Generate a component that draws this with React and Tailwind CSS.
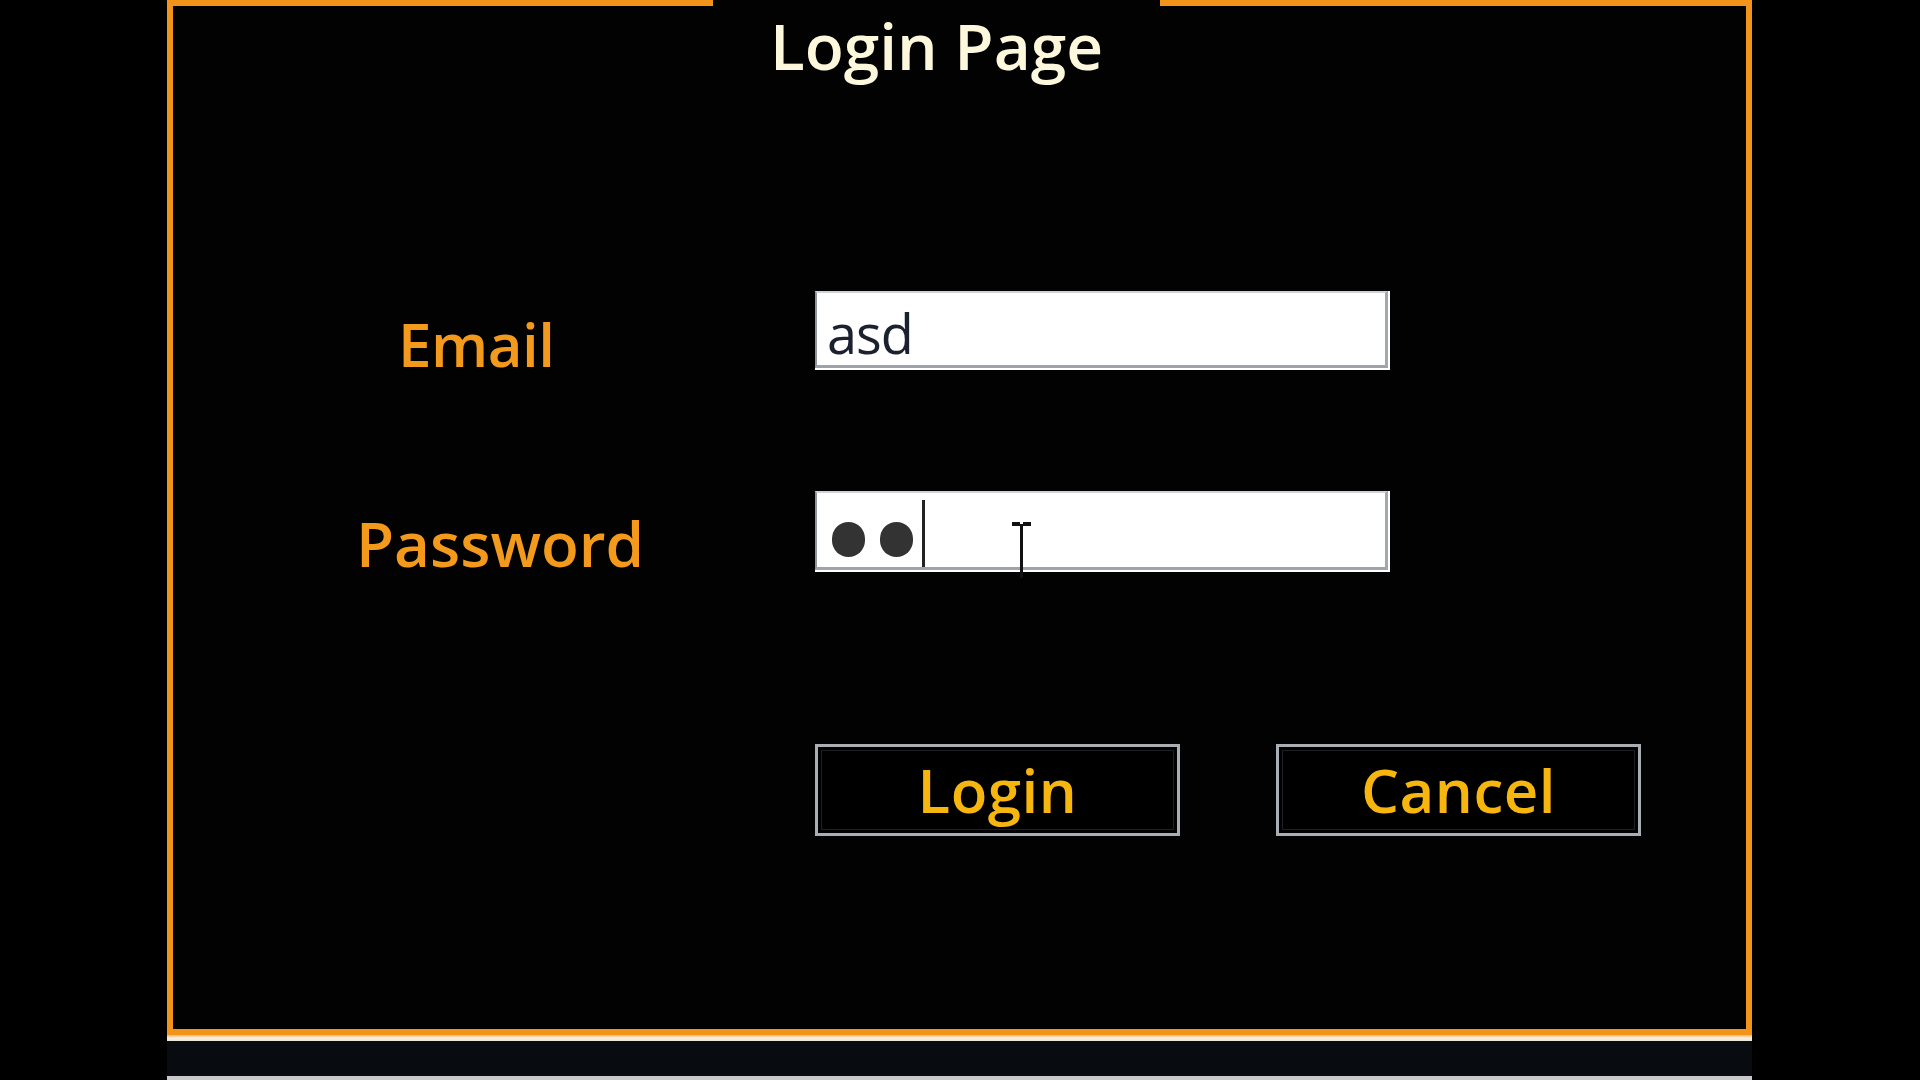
import React from "react";

const font = { fontFamily: '"Open Sans", "Noto Sans", sans-serif' };

function TextBox({ children, className = "" }) {
  return (
    <div className={"w-[575px] bg-white pr-[2px] pb-[2px] " + className}>
      <div className="relative h-full border-t-2 border-l-2 border-t-[#cfd2d6] border-l-[#8f949a] border-b-[3px] border-r-[3px] border-b-[#9ea3a9] border-r-[#a3a8ae] bg-white">
        {children}
      </div>
    </div>
  );
}

function Btn({ label }) {
  return (
    <div className="w-[365px] h-[92px] border-[3px] border-[#a9aeb5] bg-black p-[3px]">
      <div className="w-full h-full border border-[#1c1f23] flex items-center justify-center">
        <span className="text-[60px] leading-none font-semibold text-[#f6b60e] tracking-[0.5px]" style={font}>
          {label}
        </span>
      </div>
    </div>
  );
}

export default function App() {
  return (
    <div className="w-[1920px] h-[1080px] bg-black overflow-hidden" style={font}>
      <div className="ml-[167px] w-[1585px]">
        <div className="h-[1035px] border-l-[6px] border-r-[6px] border-b-[6px] border-[#f29419] bg-[#020202] flex flex-col">
          {/* top border with gap */}
          <div className="flex h-[6px]">
            <div className="w-[540px] bg-[#f29419]" />
            <div className="w-[447px]" />
            <div className="flex-1 bg-[#f29419]" />
          </div>
          {/* title */}
          <div className="flex mt-[8px]">
            <div className="w-[540px]" />
            <div className="w-[447px] flex justify-center">
              <span className="text-[64px] leading-none font-semibold text-[#fdf8dc]">Login Page</span>
            </div>
          </div>
          {/* email row */}
          <div className="flex mt-[213px]">
            <div className="w-[642px] pl-[225px] pt-[23px]">
              <span className="text-[60px] leading-none font-semibold text-[#f39a1c] tracking-[-0.5px]">Email</span>
            </div>
            <TextBox className="h-[79px]">
              <div className="pl-[10px] pt-[8px] text-[54px] leading-none text-[#1c2130] tracking-[-1px] flex items-center h-full">
                asd
              </div>
            </TextBox>
          </div>
          {/* password row */}
          <div className="flex mt-[117px]">
            <div className="w-[642px] pl-[183px] pt-[21px]">
              <span className="text-[62px] leading-none font-semibold text-[#f39a1c]">Password</span>
            </div>
            <TextBox className="h-[81px]">
              <div className="flex items-start h-full pl-[15px] pt-[29px] gap-[15px]">
                <div className="w-[33px] h-[35px] rounded-full bg-[#333333]" />
                <div className="w-[33px] h-[35px] rounded-full bg-[#333333]" />
                <div className="w-[3px] h-[67px] bg-[#222] -mt-[22px] -ml-[6px]" />
              </div>
              <svg className="absolute left-[193px] top-[29px]" width="24" height="56" viewBox="0 0 24 56">
                <rect x="2" y="0" width="8" height="4" fill="#111" />
                <rect x="13" y="0" width="8" height="4" fill="#111" />
                <rect x="10" y="2" width="3" height="54" fill="#111" />
              </svg>
            </TextBox>
          </div>
          {/* buttons */}
          <div className="flex mt-[170px] pl-[642px] gap-[96px]">
            <Btn label="Login" />
            <Btn label="Cancel" />
          </div>
        </div>
        <div className="h-[6px] bg-gradient-to-b from-[#f4b46a] via-[#fbf1dc] to-[#e8e4da]" />
        <div className="h-[35px] bg-[#080b10]" />
        <div className="h-[4px] bg-[#c9c9c9]" />
      </div>
    </div>
  );
}
